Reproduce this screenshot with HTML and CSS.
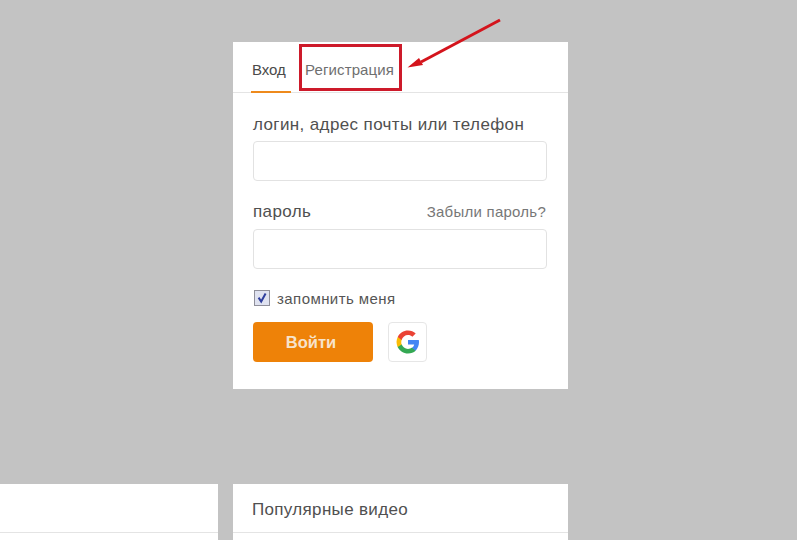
FILE: index.html
```
<!DOCTYPE html>
<html lang="ru">
<head>
<meta charset="utf-8">
<title>Вход</title>
<link rel="stylesheet" href="styles.css">
</head>
<body>
<div class="page">
  <div class="login-row">
    <section class="card login">
      <nav class="tabs">
        <a class="tab tab-active">Вход</a>
        <a class="tab">Регистрация</a>
      </nav>
      <form class="form">
        <label class="label">логин, адрес почты или телефон</label>
        <div class="input input-first"></div>
        <div class="pass-head">
          <label class="label">пароль</label>
          <a class="forgot">Забыли пароль?</a>
        </div>
        <div class="input"></div>
        <div class="remember">
          <span class="check">
            <svg width="12" height="12" viewBox="0 0 12 12"><path d="M2.6 5.6 5.2 9.6 9.6 1.6" fill="none" stroke="#2f3f9e" stroke-width="2"/></svg>
          </span>
          <span>запомнить меня</span>
        </div>
        <div class="actions">
          <button type="button" class="submit">Войти</button>
          <span class="google">
            <svg width="24" height="24" viewBox="0 0 48 48">
              <path fill="#4285f4" d="M46 24.5c0-1.600-.1-3.100-.4-4.500H24v8.800h12.400c-.6 2.800-2.200 5.200-4.700 6.800v5.700h7.500C43.500 36.300 46 30.900 46 24.500z"/>
              <path fill="#34a853" d="M24 47c6.200 0 11.400-2 15.200-5.600l-7.500-5.700c-2 1.400-4.600 2.200-7.700 2.200-6 0-11-4-12.800-9.400H3.500v5.900C7.300 41.800 15 47 24 47z"/>
              <path fill="#fbbc05" d="M11.200 29c-.5-1.400-.7-3-.7-4.500s.3-3.100.7-4.500v-5.900H3.500C2 17.200 1 20.500 1 24s1 6.800 2.500 9.900L11.200 29z"/>
              <path fill="#ea4335" d="M24 10.100c3.400 0 6.400 1.200 8.800 3.400l6.600-6.600C35.400 3.200 30.200 1 24 1 15 1 7.300 6.200 3.500 14l7.700 6c1.800-5.800 6.800-9.900 12.800-9.900z"/>
            </svg>
          </span>
        </div>
      </form>
    </section>
  </div>
  <div class="bottom-row">
    <section class="card stub"><div class="stub-head"></div></section>
    <section class="card stub"><div class="stub-head">Популярные видео</div></section>
  </div>
</div>
<div class="callout"></div>
<svg class="arrow" width="110" height="70" viewBox="0 0 110 70">
  <path d="M94 3 15 45" stroke="#d4141c" stroke-width="3" fill="none"/>
  <path d="M1.500 50.500 13 41 17 48z" fill="#d4141c"/>
</svg>
</body>
</html>
```
FILE: styles.css
```
* { box-sizing: border-box; }
html, body { margin: 0; height: 100%; }
body {
  position: relative;
  overflow: hidden;
  background: #c3c3c3;
  font-family: "Liberation Sans", Arial, sans-serif;
  color: #4b4b4b;
}
.page { padding-top: 42px; }
.card { background: #fff; }
.login-row { padding-left: 233px; }
.login { width: 335px; height: 347px; }
.tabs {
  display: flex;
  gap: 20px;
  height: 51px;
  padding: 0 18px;
  border-bottom: 1px solid #e4e4e4;
}
.tab {
  display: block;
  padding: 19px 0 0;
  font-size: 15px;
  line-height: 17px;
  color: #6f6f6f;
  letter-spacing: .12px;
}
.tab-active {
  color: #4a4a4a;
  width: 40px;
  margin-right: -6px;
  padding-left: 1px;
  letter-spacing: -.1px;
  border-bottom: 2px solid #ee8a1c;
  height: 51px;
}
.form { padding: 22px 21px 0 20px; }
.label { font-size: 17px; line-height: 20px; color: #505050; display: block; letter-spacing: .38px; }
.input {
  height: 40px;
  margin-top: 7px;
  border: 1px solid #e2e2e2;
  border-radius: 4px;
  background: #fff;
}
.input-first { margin-top: 6px; }
.pass-head {
  display: flex;
  justify-content: space-between;
  align-items: baseline;
  margin-top: 21px;
}
.forgot { font-size: 15px; color: #777; letter-spacing: .25px; margin-right: 1px; }
.remember {
  display: flex;
  align-items: center;
  gap: 7px;
  margin-top: 20px;
  height: 18px;
  font-size: 15px;
  letter-spacing: .43px;
  color: #555;
}
.check {
  width: 16px;
  height: 16px;
  margin-left: 1px;
  border: 1px solid #8f8f9a;
  background: #dfe2f0;
  display: flex;
  align-items: center;
  justify-content: center;
}
.actions { display: flex; align-items: center; gap: 15px; margin-top: 15px; }
.submit {
  width: 120px;
  height: 40px;
  padding: 0 4px 0 0;
  border: 0;
  border-radius: 4px;
  background: #ee8208;
  color: #f7e3cb;
  font-family: inherit;
  font-size: 16.500px;
  font-weight: bold;
}
.google {
  width: 39px;
  height: 40px;
  border: 1px solid #e6e6e6;
  border-radius: 4px;
  display: flex;
  align-items: center;
  justify-content: center;
}
.bottom-row {
  display: grid;
  grid-template-columns: 218px 335px;
  gap: 15px;
  margin-top: 95px;
}
.stub { height: 60px; }
.stub-head {
  height: 49px;
  padding: 16px 19px 0;
  border-bottom: 1px solid #e4e4e4;
  font-size: 17px;
  line-height: 20px;
  color: #505050;
  letter-spacing: .33px;
}
.callout {
  position: absolute;
  left: 299px;
  top: 44px;
  width: 103px;
  height: 47px;
  border: 3px solid #cd1a2a;
}
.arrow { position: absolute; left: 406px; top: 17px; }
```
